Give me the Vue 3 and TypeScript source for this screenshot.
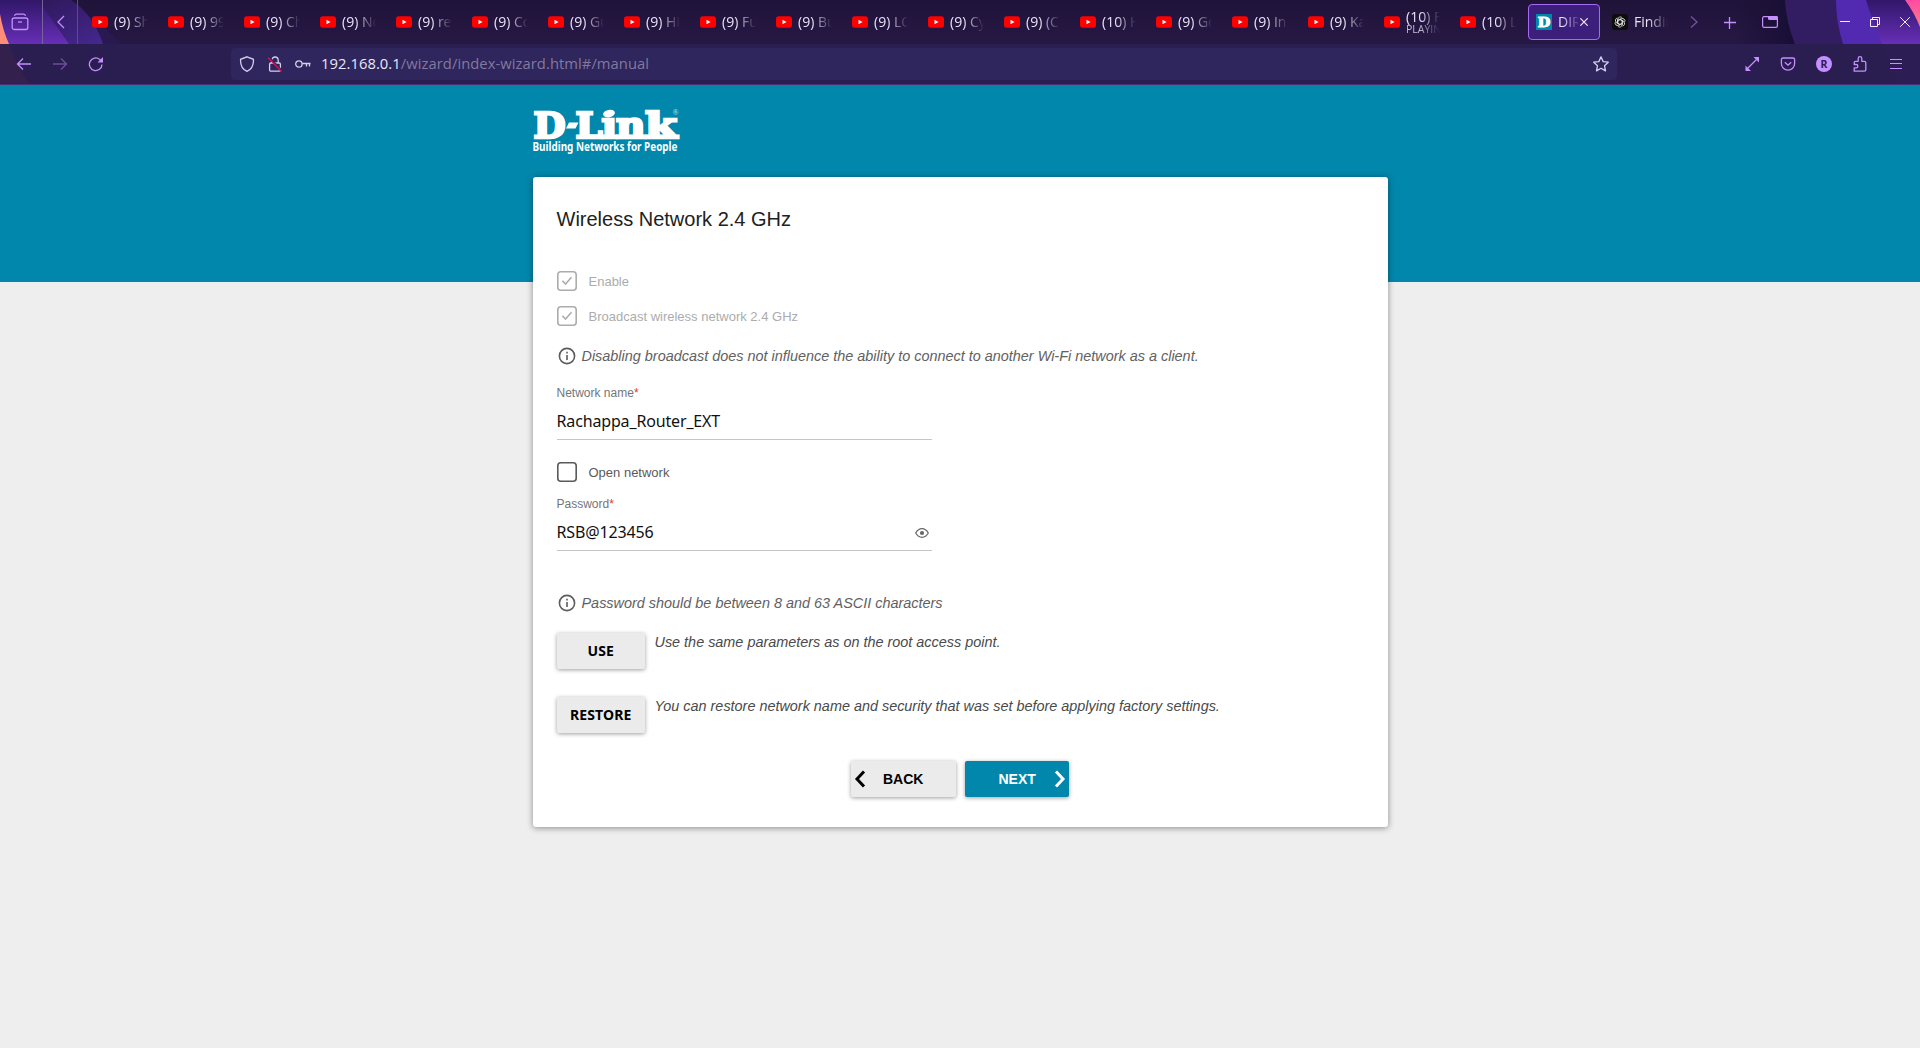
<script setup lang="ts">
interface Tab {
  label: string
  kind: 'youtube' | 'dlink' | 'gpt'
  status?: string
}

const titles = ['(9) Sh', '(9) 99', '(9) Ch', '(9) No', '(9) re', '(9) Co', '(9) Gu', '(9) HI', '(9) Fu', '(9) Bu', '(9) LO', '(9) Cy', '(9) (C', '(10) H', '(9) Ge', '(9) In', '(9) Ka']

const tabs: Tab[] = [
  ...titles.map((label): Tab => ({ label, kind: 'youtube' })),
  { label: '(10) F', kind: 'youtube', status: 'PLAYING' },
  { label: '(10) L', kind: 'youtube' },
  { label: 'DIR', kind: 'dlink' },
  { label: 'Findin', kind: 'gpt' },
]

const petals = [0, 60, 120, 180, 240, 300]
</script>

<template>
  <div class="window">
    <header class="chrome">
      <svg class="art" width="1920" height="84" viewBox="0 0 1920 84">
        <defs>
          <linearGradient id="violet" x1="0" y1="0" x2="0" y2="1">
            <stop offset="0" stop-color="#30176a" />
            <stop offset="1" stop-color="#672fb6" />
          </linearGradient>
          <linearGradient id="indigo" x1="0" y1="0" x2="1" y2="1">
            <stop offset="0" stop-color="#2a1550" />
            <stop offset="1" stop-color="#45278f" />
          </linearGradient>
          <linearGradient id="pink" x1="0" y1="0" x2="0" y2="1">
            <stop offset="0" stop-color="#ff4aa2" />
            <stop offset="1" stop-color="#ff7d87" />
          </linearGradient>
          <linearGradient id="shade" x1="0" y1="0" x2="1" y2="0">
            <stop offset="0" stop-color="#180e34" stop-opacity="0" />
            <stop offset="1" stop-color="#180e34" />
          </linearGradient>
        </defs>
        <path d="M96 20Q112 34 122 44H102Z" fill="#2a1950" />
        <path d="M0 0H71Q94 15 103 44H0Z" fill="url(#indigo)" />
        <path d="M0 0H38L69 44H0Z" fill="url(#violet)" />
        <path d="M0 14Q3 31 9 44H0Z" fill="#ff8d78" />
        <path d="M1735 0H1785Q1787 22 1795 44H1735Z" fill="url(#shade)" />
        <path d="M1785 0H1920V44H1795Q1786 22 1785 0Z" fill="#321c62" />
        <path d="M1836 0H1920V44H1843Q1836 22 1836 0Z" fill="#5229b1" />
        <path d="M1866 0H1920V44H1882Q1872 20 1866 0Z" fill="url(#violet)" />
        <path d="M1905 0H1920V27Q1914 12 1905 0Z" fill="url(#pink)" />
        <path d="M0 44H9Q18 68 30 84H0Z" fill="#33204c" />
        <path d="M1882 44H1920V84H1898Z" fill="#2d1d55" />
      </svg>

      <div class="tabbar">
        <div class="cell archive">
          <svg width="18" height="18" viewBox="0 0 18 18" class="line">
            <path d="M3.5 2.8Q4 1.2 5.500 1.200H12.500Q14 1.200 14.500 2.800" />
            <rect x="1.200" y="5" width="15.600" height="11.500" rx="2" />
            <path d="M7 9H11" />
          </svg>
        </div>
        <div class="cell scroll-left">
          <svg width="10" height="14" viewBox="0 0 10 14" class="line"><path d="M8 1L2 7L8 13" /></svg>
        </div>
        <div class="tabs">
          <div v-for="(tab, i) in tabs" :key="i" class="tab" :class="{ active: tab.kind === 'dlink' }">
            <svg v-if="tab.kind === 'youtube'" class="favicon" width="16" height="16" viewBox="0 0 16 16">
              <rect y="2.200" width="16" height="11.600" rx="2.800" fill="#f00" />
              <path d="M6.500 5.700L10.600 8L6.500 10.300Z" fill="#fff" />
            </svg>
            <svg v-else-if="tab.kind === 'dlink'" class="favicon" width="16" height="16" viewBox="0 0 16 16">
              <rect width="16" height="16" fill="#0087a9" />
              <text x="1.800" y="13" textLength="12.500" lengthAdjust="spacingAndGlyphs" class="slab" font-size="13.500" fill="#fff" stroke="#fff" stroke-width="1.100">D</text>
            </svg>
            <svg v-else class="favicon" width="16" height="16" viewBox="0 0 16 16">
              <rect width="16" height="16" rx="3" fill="#0d0d0d" />
              <path v-for="a in petals" :key="a" :transform="`rotate(${a} 8 8)`" d="M6 8.800V5A2.300 2.300 0 0 1 10.200 3.900M6 6.300L9.200 4.500" fill="none" stroke="#e8e8e8" stroke-width=".8" />
            </svg>
            <div class="tab-text" :class="{ short: tab.kind === 'dlink' }">
              <span>{{ tab.label }}</span>
              <small v-if="tab.status">{{ tab.status }}</small>
            </div>
            <svg v-if="tab.kind === 'dlink'" class="tab-close" width="8" height="8" viewBox="0 0 8 8">
              <path d="M.3.3L7.700 7.700M7.700.3L.3 7.700" stroke="#f2e9ff" stroke-width="1.200" />
            </svg>
          </div>
        </div>
        <div class="cell w28 dim">
          <svg width="10" height="14" viewBox="0 0 10 14" class="line"><path d="M2 1.500L8 7L2 12.500" /></svg>
        </div>
        <div class="cell w44">
          <svg width="12" height="12" viewBox="0 0 12 12" class="line plus"><path d="M5.500 0V12M0 5.500H12" /></svg>
        </div>
        <div class="cell w36">
          <svg width="16" height="12" viewBox="0 0 16 12">
            <rect x=".6" y=".6" width="14.800" height="10.800" rx="1.600" fill="none" stroke="#c58fff" stroke-width="1.200" />
            <path d="M6 0H14.500Q16 0 16 1.500V4H7.500Q6 4 6 2.500Z" fill="#c58fff" />
          </svg>
        </div>
        <div class="window-buttons">
          <svg width="30" height="44" viewBox="0 0 30 44"><path d="M10 21.500H20" class="win" /></svg>
          <svg width="30" height="44" viewBox="0 0 30 44">
            <path d="M10.500 19.500H17.500V26.500H10.500ZM12.500 19.500V17.500H19.500V24.500H17.500" class="win" />
          </svg>
          <svg width="30" height="44" viewBox="0 0 30 44"><path d="M10.200 17.200L19.800 26.800M19.800 17.200L10.200 26.800" class="win" /></svg>
        </div>
      </div>

      <div class="navbar">
        <div class="nav-buttons">
          <svg width="16" height="16" viewBox="0 0 16 16" class="line"><path d="M15 8H1.500M7 2.500L1.500 8L7 13.500" /></svg>
          <svg width="16" height="16" viewBox="0 0 16 16" class="line faded"><path d="M1 8H14.500M9 2.500L14.500 8L9 13.500" /></svg>
          <svg width="16" height="16" viewBox="0 0 16 16" class="line">
            <path d="M14 8.500A6.300 6.300 0 1 1 11.800 3.500L13 4.600" />
            <path d="M15 1V6.500H9.500Z" fill="#c58fff" stroke="none" />
          </svg>
        </div>
        <div class="urlbar">
          <div class="identity">
            <svg width="16" height="16" viewBox="0 0 16 16" class="pale">
              <path d="M8 .8L14.400 3.300C14.800 9 12.500 13.200 8 15.300C3.500 13.200 1.200 9 1.600 3.300Z" />
            </svg>
            <svg width="16" height="16" viewBox="0 0 16 16" class="pale">
              <rect x="2.600" y="7" width="10.800" height="8.200" rx="1.200" />
              <path d="M4.800 7V4.200A3.200 3.200 0 0 1 11.200 4.200V7" />
              <path d="M1.800 1.200L15 14.800" stroke="#2e265c" stroke-width="2" />
              <path d="M1.200 1.800L14.500 15.500" stroke="#e0134f" />
            </svg>
            <svg width="16" height="16" viewBox="0 0 16 16" class="pale">
              <circle cx="3.900" cy="8" r="3.200" />
              <path d="M7.100 7.500H15.500M11.500 7.500V10.500M14.500 7.500V10.500" />
            </svg>
          </div>
          <span class="url"><b>192.168.0.1</b>/wizard/index-wizard.html#/manual</span>
          <svg class="star pale" width="16" height="16" viewBox="0 0 16 16">
            <path stroke-linejoin="round" d="M8 .9L10.200 5.600L15.300 6.200L11.500 9.700L12.500 14.900L8 12.300L3.500 14.900L4.500 9.700L.7 6.200L5.800 5.600Z" />
          </svg>
        </div>
        <div class="actions">
          <svg width="16" height="16" viewBox="0 0 16 16" class="line">
            <path d="M3.500 12.500L12.500 3.500" />
            <path d="M9.500 1H15V6.500ZM1.500 9.500V15H7Z" fill="#c58fff" stroke="none" />
          </svg>
          <svg width="16" height="16" viewBox="0 0 16 16" class="line">
            <path d="M3 2H13Q14.600 2 14.600 3.600V7.500A6.600 6.600 0 0 1 1.400 7.500V3.600Q1.400 2 3 2ZM4.800 6.200L8 9.200L11.200 6.200" />
          </svg>
          <svg width="16" height="16" viewBox="0 0 16 16">
            <circle cx="8" cy="8" r="8" fill="#c58fff" />
            <text x="8" y="12" text-anchor="middle" class="avatar">R</text>
          </svg>
          <svg width="16" height="16" viewBox="0 0 16 16" class="line">
            <path stroke-linejoin="round" d="M2.200 15.200V11.800H4.200A1.500 1.500 0 0 0 4.200 8.500H2.200V6.500Q2.200 5.300 3.400 5.300H6.200V2.500A1.700 1.700 0 0 1 9.800 2.500V5.300H12.300Q13.800 5.300 13.800 6.800V13.800Q13.800 15.200 12.400 15.200Z" />
          </svg>
          <svg width="16" height="16" viewBox="0 0 16 16" class="line menu"><path d="M2 3.500H14M2 7.500H14M2 12.500H14" /></svg>
        </div>
      </div>
    </header>

    <main class="page">
      <div class="column">
        <svg class="logo" width="150" height="56" viewBox="0 0 150 56">
          <g class="slab" fill="#fff" stroke="#fff" stroke-width="2.600" font-size="35.500">
            <text x=".6" y="38.700" textLength="32" lengthAdjust="spacingAndGlyphs">D</text>
            <path d="M36 23.500H45.500L42.500 29.500H33Z" stroke="none" />
            <text x="42.500" y="38.700" textLength="27" lengthAdjust="spacingAndGlyphs">L</text>
            <text x="68.500" y="38.700" textLength="15.500" lengthAdjust="spacingAndGlyphs">ı</text>
            <ellipse cx="76" cy="14.600" rx="6" ry="3.800" transform="rotate(-12 76 14.600)" stroke="none" />
            <text x="83" y="38.700" textLength="29.500" lengthAdjust="spacingAndGlyphs">n</text>
            <text x="112" y="38.700" textLength="32" lengthAdjust="spacingAndGlyphs">k</text>
          </g>
          <text x="139.500" y="16" class="reg">®</text>
          <text x="-.5" y="51.500" class="tagline" textLength="145" lengthAdjust="spacingAndGlyphs">Building Networks for People</text>
        </svg>

        <section class="card">
          <h1>Wireless Network 2.4 GHz</h1>

          <label class="check disabled">
            <svg width="20" height="20" viewBox="0 0 20 20">
              <rect x=".8" y=".8" width="18.400" height="18.400" rx="3" />
              <path d="M5.300 9.800L8.500 13L14.500 6.300" />
            </svg>
            <span>Enable</span>
          </label>
          <label class="check disabled second">
            <svg width="20" height="20" viewBox="0 0 20 20">
              <rect x=".8" y=".8" width="18.400" height="18.400" rx="3" />
              <path d="M5.300 9.800L8.500 13L14.500 6.300" />
            </svg>
            <span>Broadcast wireless network 2.4 GHz</span>
          </label>

          <p class="info first">
            <svg width="20" height="20" viewBox="0 0 20 20">
              <circle cx="10" cy="10" r="7.600" />
              <path d="M10 9V14M10 5.800V7.600" />
            </svg>
            Disabling broadcast does not influence the ability to connect to another Wi-Fi network as a client.
          </p>

          <div class="field">
            <div class="caption">Network name<i>*</i></div>
            <div class="value name">Rachappa_Router_EXT</div>
          </div>

          <label class="check open">
            <svg width="20" height="20" viewBox="0 0 20 20">
              <rect x=".8" y=".8" width="18.400" height="18.400" rx="3" />
            </svg>
            <span>Open network</span>
          </label>

          <div class="field password">
            <div class="caption">Password<i>*</i></div>
            <div class="value">
              <span>RSB@123456</span>
              <svg width="14" height="10" viewBox="0 0 14 10">
                <path d="M.7 5Q3.200.7 7 .7T13.300 5Q10.800 9.300 7 9.300T.7 5Z" />
                <circle cx="7" cy="5" r="2.100" />
              </svg>
            </div>
          </div>

          <p class="info last">
            <svg width="20" height="20" viewBox="0 0 20 20">
              <circle cx="10" cy="10" r="7.600" />
              <path d="M10 9V14M10 5.800V7.600" />
            </svg>
            Password should be between 8 and 63 ASCII characters
          </p>

          <div class="option">
            <button class="btn wide">USE</button>
            <em>Use the same parameters as on the root access point.</em>
          </div>
          <div class="option">
            <button class="btn wide">RESTORE</button>
            <em>You can restore network name and security that was set before applying factory settings.</em>
          </div>

          <div class="steps">
            <button class="btn back">
              <svg width="12" height="18" viewBox="0 0 12 18"><path d="M10 1.500L3 9L10 16.500" /></svg>
              <span>BACK</span>
            </button>
            <button class="btn next">
              <span>NEXT</span>
              <svg width="12" height="18" viewBox="0 0 12 18"><path d="M2 1.500L9 9L2 16.500" /></svg>
            </button>
          </div>
        </section>
      </div>
    </main>
  </div>
</template>

<style>
body {
  margin: 0;
  background: #eee;
}
</style>

<style scoped>
* {
  box-sizing: border-box;
}
.window {
  width: 1920px;
  height: 1048px;
  overflow: hidden;
  background: #eee;
  font-family: "Liberation Sans", Arial, sans-serif;
}
svg {
  display: block;
  flex: none;
}
.chrome {
  position: relative;
  height: 85px;
  border-bottom: 1px solid #4a2f77;
  background: linear-gradient(#201339, #261844 44px, #2a1d50 44px, #2a1d50);
  font-family: "Open Sans", "Noto Sans", sans-serif;
}
.art {
  position: absolute;
  left: 0;
  top: 0;
}
.tabbar,
.navbar {
  position: relative;
  display: flex;
  align-items: center;
}
.tabbar {
  height: 44px;
}
.cell {
  height: 44px;
  display: flex;
  align-items: center;
  justify-content: center;
}
.archive {
  width: 43px;
  border-right: 1px solid #77639b;
  padding-right: 2px;
}
.scroll-left {
  width: 35px;
  padding-left: 2px;
  border-right: 1px solid #604b86;
}
.w28 { width: 28px; }
.w44 { width: 44px; }
.w36 { width: 36px; }
.dim { opacity: .5; }
.line {
  fill: none;
  stroke: #c58fff;
  stroke-width: 1.3;
}
.plus {
  margin-top: 1px;
}
.faded {
  opacity: .42;
}
.menu {
  stroke-width: 1;
}
.tabs {
  display: flex;
  margin-left: 6px;
}
.tab {
  width: 72px;
  height: 36px;
  margin-right: 4px;
  padding-left: 8px;
  display: flex;
  align-items: center;
  border-radius: 4px;
}
.tab.active {
  padding-left: 7px;
  background: #3c1f7b;
  border: 1px solid #a56bf5;
}
.tab-text {
  width: 34px;
  margin-left: 6px;
  overflow: hidden;
  display: flex;
  flex-direction: column;
  font-size: 14px;
  line-height: 20px;
  white-space: nowrap;
  color: #e9e2f7;
  -webkit-mask-image: linear-gradient(90deg, #000 14px, transparent 34px);
  mask-image: linear-gradient(90deg, #000 14px, transparent 34px);
}
.tab-text.short {
  width: 20px;
  -webkit-mask-image: linear-gradient(90deg, #000 4px, transparent 22px);
  mask-image: linear-gradient(90deg, #000 4px, transparent 22px);
}
.tab-text small {
  margin-top: -4px;
  font-size: 10.5px;
  line-height: 13px;
  opacity: .8;
}
.tab-text:has(small) {
  margin-bottom: 1px;
}
.tab-close {
  margin-left: 2px;
}
.window-buttons {
  display: flex;
  margin-left: auto;
}
.win {
  fill: none;
  stroke: #f3eaff;
  stroke-width: 1;
}
.slab {
  font-family: "DejaVu Serif", serif;
  font-weight: 700;
}
.navbar {
  height: 40px;
}
.nav-buttons {
  width: 231px;
  display: flex;
  gap: 20px;
  padding-left: 16px;
}
.urlbar {
  width: 1386px;
  height: 32px;
  padding: 0 8px;
  display: flex;
  align-items: center;
  border-radius: 4px;
  background: #2e265c;
}
.identity {
  display: flex;
  gap: 12px;
}
.pale {
  fill: none;
  stroke: #d9cdee;
  stroke-width: 1.3;
}
.url {
  margin-left: 10px;
  padding-bottom: 2px;
  font-size: 14.75px;
  letter-spacing: .06px;
  line-height: 20px;
  color: #83799f;
  white-space: nowrap;
}
.url b {
  font-weight: 400;
  color: #ece6f7;
}
.star {
  margin-left: auto;
}
.actions {
  display: flex;
  gap: 20px;
  margin-left: auto;
  padding-right: 16px;
}
.avatar {
  font: 700 10.5px "Noto Sans", sans-serif;
  fill: #2a1d50;
}
.page {
  height: 963px;
  background: linear-gradient(#0087ab 197px, #eee 197px);
}
.column {
  width: 855px;
  margin: 0 auto;
  padding-top: 14px;
}
.logo {
  margin-bottom: 22px;
  overflow: visible;
}
.reg {
  font: 8px "Liberation Serif", serif;
  fill: #c9e7ee;
}
.tagline {
  font: 700 11.5px "Noto Sans", sans-serif;
  fill: #fff;
}
.card {
  height: 650px;
  padding: 30px 24px 0;
  border-radius: 3px;
  background: #fff;
  box-shadow: 0 1px 6px rgba(0, 0, 0, .42);
}
h1 {
  margin: 0;
  height: 24px;
  font-size: 20px;
  font-weight: 400;
  line-height: 24px;
  color: #212121;
}
.check {
  display: flex;
  align-items: center;
  gap: 12px;
  height: 20px;
  margin-top: 40px;
  font-size: 13px;
  line-height: 20px;
  color: #5a5a5a;
}
.check span {
  padding-top: 2px;
}
.check svg {
  fill: none;
  stroke: #5a5a5a;
  stroke-width: 1.6;
}
.check.disabled {
  color: #acacac;
}
.check.disabled svg {
  stroke: #acacac;
}
.check.second {
  margin-top: 15px;
}
.info {
  display: flex;
  align-items: center;
  gap: 5px;
  height: 20px;
  margin: 20px 0 0;
  font-size: 14.43px;
  line-height: 20px;
  font-style: italic;
  white-space: nowrap;
  color: #616161;
}
.info svg {
  fill: none;
  stroke: #5c5c5c;
  stroke-width: 1.6;
}
.field {
  width: 375px;
  margin-top: 19px;
}
.caption {
  height: 16px;
  font-size: 12px;
  line-height: 16px;
  color: #757575;
}
.caption i {
  font-style: normal;
  color: #e53920;
}
.value {
  height: 39px;
  padding: 8px 3px 7px 0;
  display: flex;
  align-items: center;
  justify-content: space-between;
  border-bottom: 1px solid #c6c6c6;
  font: 16px "Noto Sans", sans-serif;
  letter-spacing: -.15px;
  color: #111;
}
.value svg {
  margin-top: 2px;
  fill: none;
  stroke: #666;
  stroke-width: 1.2;
}
.value circle {
  fill: #666;
  stroke: none;
}
.check.open {
  margin-top: 22px;
}
.field.password {
  margin-top: 14px;
}
.info.last {
  margin-top: 42px;
  margin-bottom: 20px;
}
.option {
  display: flex;
  height: 36px;
  margin-bottom: 28px;
}
.option em {
  margin-left: 9.5px;
  font-size: 14.42px;
  line-height: 18px;
  color: #4a4a4a;
}
.btn {
  height: 36px;
  padding: 0;
  border: 0;
  border-radius: 2px;
  background: #ebebeb;
  box-shadow: 0 1px 4px rgba(0, 0, 0, .38);
  color: #000;
  font: 700 14px "Liberation Sans", Arial, sans-serif;
}
.btn.wide {
  width: 88.5px;
  padding: 0 0 2px;
  font-family: "Noto Sans", sans-serif;
  letter-spacing: .15px;
}
.steps {
  display: flex;
  justify-content: center;
  gap: 9px;
}
.steps .btn {
  display: flex;
  align-items: center;
}
.steps svg {
  fill: none;
  stroke: currentColor;
  stroke-width: 3;
}
.back {
  width: 105px;
  padding-left: 3px;
}
.back span {
  margin-left: 17px;
}
.next {
  width: 104px;
  padding-left: 33.5px;
  background: #0087ab;
  color: #fff;
}
.next span {
  margin-right: 18.5px;
}
</style>
